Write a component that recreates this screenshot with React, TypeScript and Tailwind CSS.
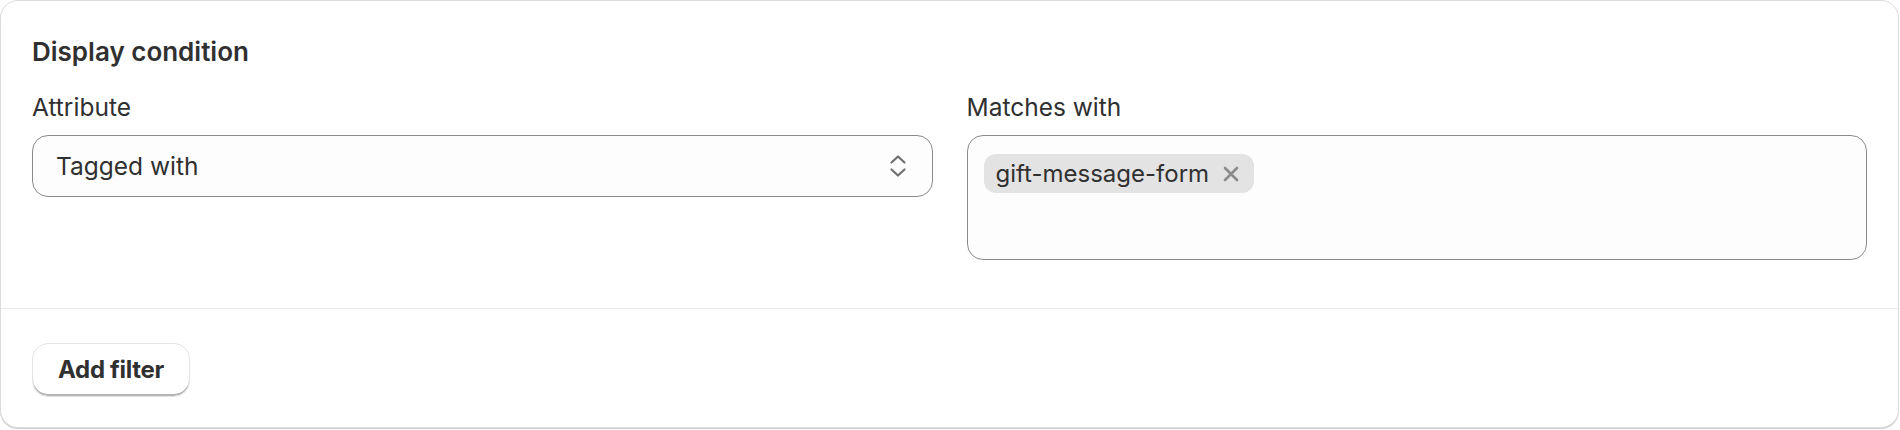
import { useState } from "react";

const font = { fontFamily: "Inter, 'Noto Sans', sans-serif" };

const SelectChevrons = () => (
  <svg width="20" height="24" viewBox="0 0 20 24" fill="none" className="shrink-0">
    <path d="M3.5 8.5 L10 2.5 L16.5 8.5" stroke="#707070" strokeWidth="2.2" strokeLinecap="round" strokeLinejoin="round" />
    <path d="M3.5 15.5 L10 21.5 L16.5 15.5" stroke="#707070" strokeWidth="2.2" strokeLinecap="round" strokeLinejoin="round" />
  </svg>
);

const CloseIcon = () => (
  <svg width="16" height="16" viewBox="0 0 16 16" fill="none">
    <path d="M2 2 L14 14 M14 2 L2 14" stroke="#8a8a8a" strokeWidth="2.6" strokeLinecap="round" />
  </svg>
);

export default function App() {
  const [tags] = useState(["gift-message-form"]);

  return (
    <div className="w-[1900px] h-[430px] bg-white text-[#303030]" style={font}>
      <div className="w-[1899px] h-[428px] rounded-[18px] border border-[#dcdcdc] shadow-[0_1px_0_#cfcfcf] bg-white flex flex-col overflow-hidden">
        <div className="px-[31px] pt-[31px] pb-[48px] border-b border-[#e8e8e8]">
          <h2 className="text-[26px] leading-[40px] font-semibold">Display condition</h2>
          <div className="grid grid-cols-2 gap-x-[34px] mt-[15px]">
            <div className="flex flex-col">
              <label className="text-[24.5px] leading-[40px]">Attribute</label>
              <div className="mt-[8px] h-[62px] rounded-[16px] border-[1.5px] border-[#8a8a8a] bg-[#fdfdfd] flex items-center justify-between pl-[23px] pr-[24px]">
                <span className="text-[24.5px] leading-[40px]">Tagged with</span>
                <SelectChevrons />
              </div>
            </div>
            <div className="flex flex-col">
              <label className="text-[24.5px] leading-[40px]">Matches with</label>
              <div className="mt-[8px] h-[125px] rounded-[16px] border-[1.5px] border-[#8a8a8a] bg-[#fdfdfd] px-[16px] pt-[18px] flex items-start gap-2">
                {tags.map((t) => (
                  <span key={t} className="h-[39px] rounded-[12px] bg-[#e3e3e3] flex items-center pl-[12px] pr-[15px] gap-[14px]">
                    <span className="text-[24px] leading-[36px]">{t}</span>
                    <CloseIcon />
                  </span>
                ))}
              </div>
            </div>
          </div>
        </div>
        <div className="px-[31px] pt-[34px]">
          <button className="h-[54px] px-[25px] rounded-[16px] bg-white border border-[#e3e3e3] shadow-[inset_0_-2px_0_#b5b5b5] text-[24px] font-bold tracking-[-0.3px]">
            Add filter
          </button>
        </div>
      </div>
    </div>
  );
}
